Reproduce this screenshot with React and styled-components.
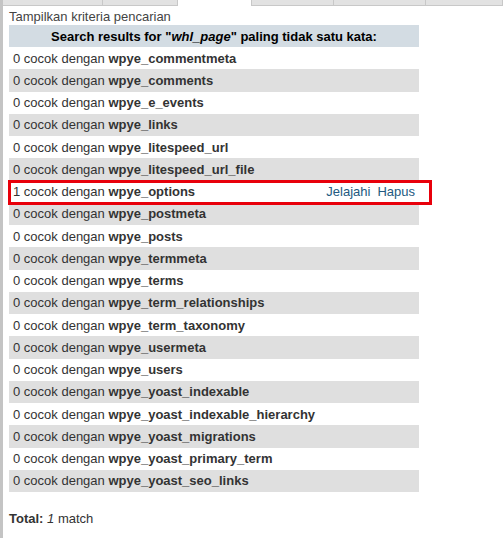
import React from 'react';
import styled, { createGlobalStyle } from 'styled-components';

const GlobalStyle = createGlobalStyle`
    html, body {
        margin: 0;
        padding: 0;
        background: #fff;
    }
    body {
        font-family: "Liberation Sans", Arial, sans-serif;
        font-size: 13px;
        color: #333;
    }
`

const Page = styled.div`
    width: 503px;
    height: 538px;
    border-left: 3px solid #c4c4c4;
    box-sizing: border-box;
    overflow: hidden;
`
const Tabs = styled.div`
    display: flex;
    height: 6px;
`
const Tab = styled.div`
    width: ${p => p.$w}px;
    box-sizing: border-box;
    background: ${p => p.$active ? '#fff' : '#e2e2e2'};
    border-right: 1px solid #c8c8c8;
    border-bottom: ${p => p.$active ? 'none' : '1px solid #c8c8c8'};
`
const Content = styled.div`
    padding: 2px 0 0 6px;
`
const Criteria = styled.div`
    color: #444;
    height: 17px;
    line-height: 17px;
`
const Table = styled.div`
    width: 410px;
`
const HeaderRow = styled.div`
    background: #d3dce3;
    height: 22px;
    display: flex;
    align-items: center;
    justify-content: center;
    font-weight: bold;
    color: #000;
`
const Row = styled.div`
    position: relative;
    height: 22.25px;
    display: flex;
    align-items: center;
    padding: 0 4px;
    background: ${p => p.$alt ? '#dfdfdf' : '#fff'};
`
const Label = styled.span`
    flex: 1;
    b {
        font-weight: bold;
    }
`
const Actions = styled.span`
    display: flex;
    gap: 7px;
`
const Link = styled.a`
    color: #235a81;
    text-decoration: none;
`
const Highlight = styled.div`
    position: absolute;
    z-index: 1;
    left: -1px;
    top: -1px;
    width: 424px;
    height: 25px;
    box-sizing: border-box;
    border: 3px solid #e8000b;
`
const Total = styled.div`
    margin-top: 19px;
    b {
        font-weight: bold;
    }
`

const tabWidths = [100, 75, 74, 82, 92, 77];

const tables = [
    ['wpye_commentmeta', 0],
    ['wpye_comments', 0],
    ['wpye_e_events', 0],
    ['wpye_links', 0],
    ['wpye_litespeed_url', 0],
    ['wpye_litespeed_url_file', 0],
    ['wpye_options', 1],
    ['wpye_postmeta', 0],
    ['wpye_posts', 0],
    ['wpye_termmeta', 0],
    ['wpye_terms', 0],
    ['wpye_term_relationships', 0],
    ['wpye_term_taxonomy', 0],
    ['wpye_usermeta', 0],
    ['wpye_users', 0],
    ['wpye_yoast_indexable', 0],
    ['wpye_yoast_indexable_hierarchy', 0],
    ['wpye_yoast_migrations', 0],
    ['wpye_yoast_primary_term', 0],
    ['wpye_yoast_seo_links', 0],
]

function App() {
    const rows = tables.map(([name, count], index) => (
        <Row key={name} $alt={index % 2 === 1}>
            <Label>{count} cocok dengan <b>{name}</b></Label>
            {count > 0 && (
                <>
                    <Actions>
                        <Link href="#">Jelajahi</Link>
                        <Link href="#">Hapus</Link>
                    </Actions>
                    <Highlight />
                </>
            )}
        </Row>
    ))

    return (
        <>
            <GlobalStyle />
            <Page>
                <Tabs>
                    {tabWidths.map((w, i) => (
                        <Tab key={i} $w={w} $active={i === 2} />
                    ))}
                </Tabs>
                <Content>
                    <Criteria>Tampilkan kriteria pencarian</Criteria>
                    <Table>
                        <HeaderRow>
                            Search results for "<i>whl_page</i>" paling tidak satu kata:
                        </HeaderRow>
                        {rows}
                    </Table>
                    <Total>
                        <b>Total:</b> <i>1</i> match
                    </Total>
                </Content>
            </Page>
        </>
    )
}

export default App
